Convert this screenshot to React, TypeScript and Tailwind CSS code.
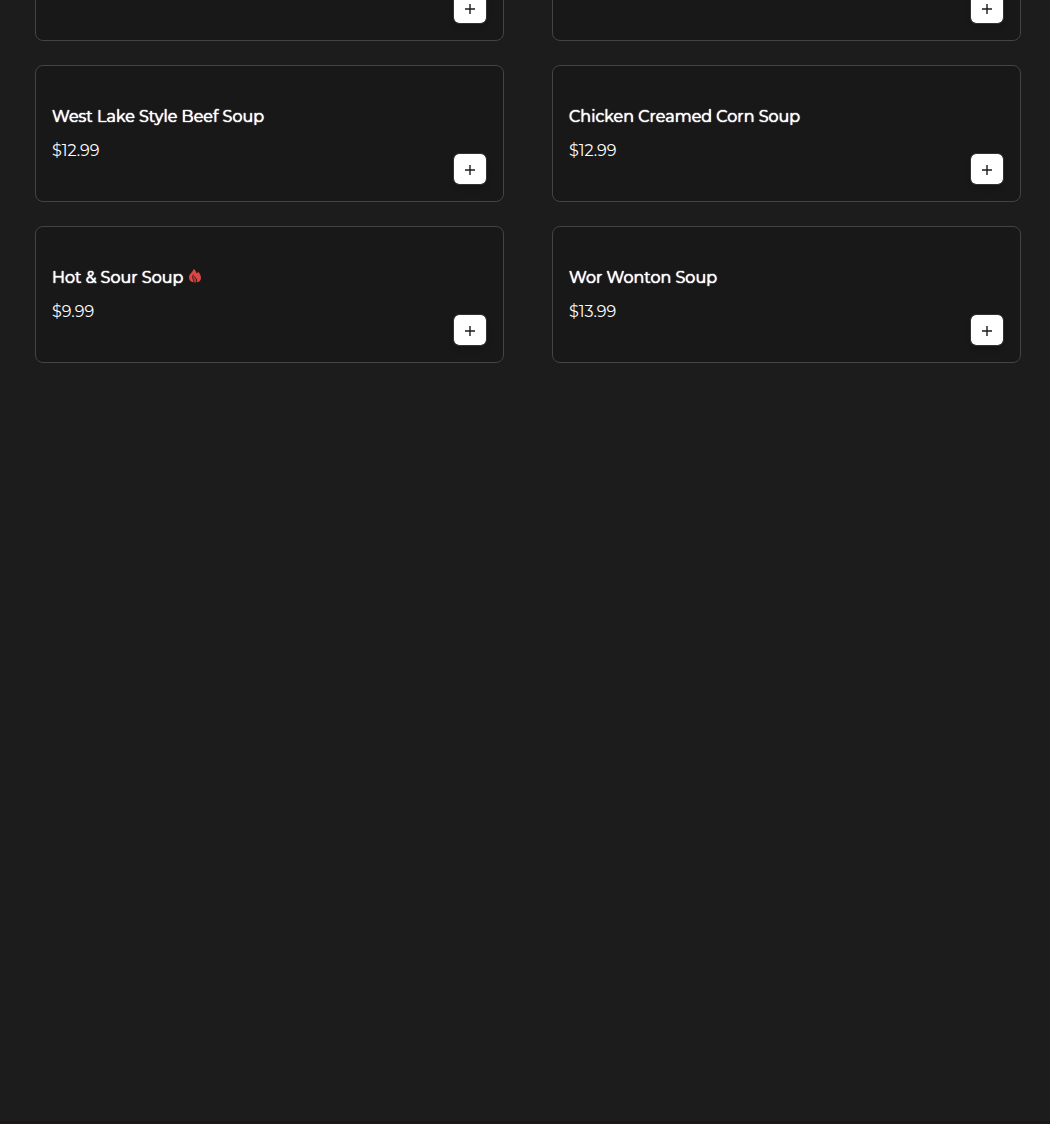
type MenuItem = {
  id: number;
  name?: string;
  price?: string;
  spicy?: boolean;
};

const soups: MenuItem[] = [
  { id: 1 },
  { id: 2 },
  { id: 3, name: "West Lake Style Beef Soup", price: "$12.99" },
  { id: 4, name: "Chicken Creamed Corn Soup", price: "$12.99" },
  { id: 5, name: "Hot & Sour Soup", price: "$9.99", spicy: true },
  { id: 6, name: "Wor Wonton Soup", price: "$13.99" },
];

function PlusIcon() {
  return (
    <svg width="10" height="10" viewBox="0 0 10 10" fill="none" stroke="currentColor" strokeWidth="1.4" aria-hidden="true">
      <path d="M5 0v10M0 5h10" />
    </svg>
  );
}

function FlameIcon() {
  return (
    <svg width="12" height="14" viewBox="0 0 12 14" className="mb-[3px] text-[#e04545]" role="img" aria-label="Spicy">
      <path
        fill="currentColor"
        d="M4.6 0C6.3 1 7.3 2.5 7.5 4.6C8.3 4.2 8.8 3.6 9 2.8C10.8 4.4 12 6.6 12 9C12 11.8 9.8 13.3 7.6 13.3C8.5 12 8.4 10.6 7.4 9.4C6.3 8.1 4.5 7.2 4.3 5.3C2.8 7.2 3.1 9.3 4.1 10.9C4.6 11.8 4.7 12.6 4.2 13.2C1.8 12.8 0 11 0 8.5C0 5.8 1.7 4.6 3 3C3.8 2 4.4 1.1 4.6 0Z"
      />
      <path
        fill="currentColor"
        opacity="0.8"
        d="M4.3 6.2C4.8 7.8 6 8.6 6.8 9.7C7.7 11 7.5 12.3 6.7 13.4H5C5.5 12.3 5.2 11.4 4.6 10.4C3.9 9.1 3.6 7.6 4.3 6.2Z"
      />
    </svg>
  );
}

function MenuCard({ item }: { item: MenuItem }) {
  return (
    <li className="flex items-end justify-between min-h-[137px] p-4 rounded-lg border border-[#444444] bg-[#181818]">
      <div className="self-center flex flex-col gap-[10px]">
        {item.name && (
          <h3 className="flex items-center gap-[6px] text-base leading-6 font-normal text-shadow-[0_0_1px_#ffffff,0_0_1px_#ffffff]">
            {item.name}
            {item.spicy && <FlameIcon />}
          </h3>
        )}
        {item.price && <p className="text-base leading-6 font-normal">{item.price}</p>}
      </div>
      <button
        type="button"
        aria-label={item.name ? `Add ${item.name}` : "Add item"}
        className="flex items-center justify-center w-[34px] h-8 pt-0.5 rounded-md border border-[#333333] bg-white bg-clip-padding text-[#1b1b1b] shadow-md"
      >
        <PlusIcon />
      </button>
    </li>
  );
}

export default function App() {
  return (
    <div className="min-h-screen flex flex-col overflow-hidden bg-[#1c1c1c] text-white font-[Montserrat,Inter,sans-serif]">
      {/* Soup section */}
      <main className="flex-1 pl-[35px] pr-[29px]">
        <ul className="grid grid-cols-2 gap-x-12 gap-y-6 -mt-24">
          {soups.map((item) => (
            <MenuCard key={item.id} item={item} />
          ))}
        </ul>
      </main>
      <footer className="h-[3px] bg-[#1c1418]" />
    </div>
  );
}
